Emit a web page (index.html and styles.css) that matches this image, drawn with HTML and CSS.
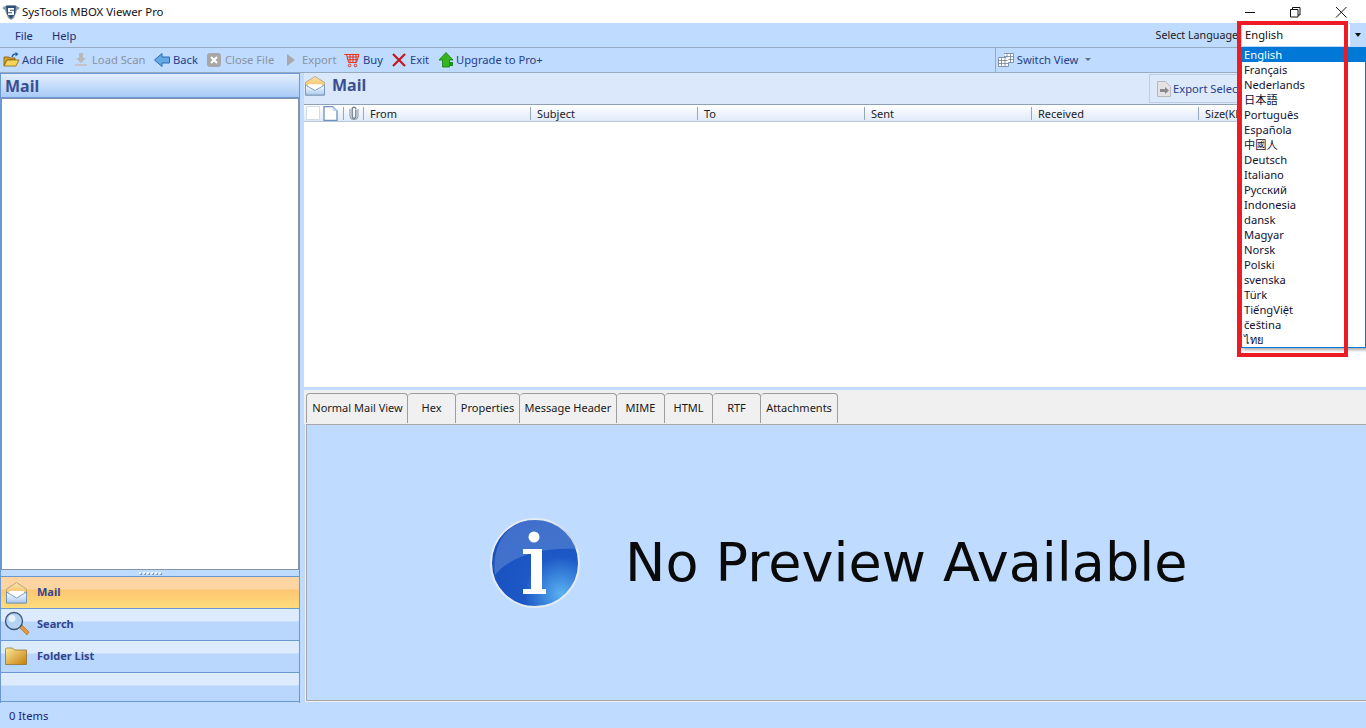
FILE: index.html
```html
<!DOCTYPE html>
<html lang="en">
  <head>
    <meta charset="UTF-8" />
    <meta name="viewport" content="width=device-width, initial-scale=1.0" />
    <title>SysTools MBOX Viewer Pro</title>
    <link rel="stylesheet" href="styles.css">
  </head>
  <body>
    <div id="app">
      <div class="title-bar">
        <svg class="title-logo" width="18" height="16" viewBox="0 0 18 16">
          <path d="M0 4l5-3h8l5 3-3 2-3 8-3 2-3-2-3-8z" fill="#8a97a6" />
          <path d="M4 2h10l-1 8-4 5-4-5z" fill="#2c4f7c" />
          <path d="M6 4h6v1.800H8v1h4V11H6V9.200h4v-1H6z" fill="#ffffff" />
        </svg>
        <span class="title-text">SysTools MBOX Viewer Pro</span>
        <div class="window-buttons">
          <svg class="win-btn" width="46" height="20" viewBox="0 0 46 20"><path d="M19 10.500h10" stroke="#111" fill="none" /></svg>
          <svg class="win-btn" width="46" height="20" viewBox="0 0 46 20"><path d="M18.500 7.500h7.500v7.500h-7.500zM20.500 7.500v-2h7.500v7.500h-2" stroke="#111" fill="none" /></svg>
          <svg class="win-btn" width="46" height="20" viewBox="0 0 46 20"><path d="M18 5l10.500 10.500M28.500 5L18 15.500" stroke="#111" fill="none" /></svg>
        </div>
      </div>

      <div class="menu-bar">
        <span class="menu-item">File</span>
        <span class="menu-item">Help</span>
        <span class="lang-label">Select Language</span>
        <div class="lang-combo">English</div>
        <div class="lang-arrow"></div>
      </div>

      <div class="toolbar">
        <span class="tool tool-add">
          <svg width="17" height="16" viewBox="0 0 17 16">
            <path d="M1 5h5l1 1h5v2H4l-3 6z" fill="#d9a425" stroke="#7a5a10" stroke-width=".8" />
            <path d="M1 14l3-6h12l-3 6z" fill="#f7d45c" stroke="#8a6510" stroke-width=".8" />
            <path d="M9 5c.5-2.500 2.500-3.500 4.500-3" fill="none" stroke="#1f5fa8" stroke-width="1.300" />
            <path d="M12.500 0l3 2-3 2.500z" fill="#1f5fa8" />
          </svg>
          Add File
        </span>
        <span class="tool tool-load off">
          <svg width="16" height="16" viewBox="0 0 16 16">
            <path d="M6 1h4v5h3l-5 5-5-5h3z" fill="#b9b9b9" />
            <path d="M2 12h12v2H2z" fill="#c4c4c4" />
          </svg>
          Load Scan
        </span>
        <span class="tool tool-back">
          <svg width="16" height="16" viewBox="0 0 16 16"><path d="M.500 8L8 1.500V5h7.500v6H8v3.500z" fill="#63a9e6" stroke="#2a6cb0" /></svg>
          Back
        </span>
        <span class="tool tool-close off">
          <svg width="14" height="14" viewBox="0 0 14 14">
            <rect x="0" y="0" width="14" height="14" rx="3" fill="#a7a7a7" />
            <path d="M4 4l6 6M10 4l-6 6" stroke="#ffffff" stroke-width="2" />
          </svg>
          Close File
        </span>
        <span class="tool tool-export off">
          <svg width="8" height="12" viewBox="0 0 8 12"><path d="M0 0l8 6-8 6z" fill="#a9a9a9" /></svg>
          Export
        </span>
        <span class="tool tool-buy">
          <svg width="16" height="16" viewBox="0 0 16 16" fill="none" stroke="#e8341c">
            <path d="M.500 2.500h2l2 8h8l2.500-8zM3 5h11M3.700 7.700h10M6 2.500v8M9 2.500v8M12 2.500v8" />
            <circle cx="5.500" cy="13.500" r="1.300" />
            <circle cx="11.500" cy="13.500" r="1.300" />
          </svg>
          Buy
        </span>
        <span class="tool tool-exit">
          <svg width="14" height="14" viewBox="0 0 14 14"><path d="M1 1l12 12M13 1L1 13" stroke="#c8161d" stroke-width="2.200" /></svg>
          Exit
        </span>
        <span class="tool tool-upgrade">
          <svg width="16" height="16" viewBox="0 0 16 16">
            <path d="M8 .500L15 8h-3.500v7h-7V8H1z" fill="#35b51f" stroke="#167a10" stroke-width=".8" />
            <rect x="11" y="10" width="4" height="4" fill="#1f8f18" />
          </svg>
          Upgrade to Pro+
        </span>
        <span class="tool-switch">
          <svg width="16" height="14" viewBox="0 0 16 14" fill="#ffffff" stroke="#6d8296" stroke-width=".8">
            <path d="M.500 4.500h10v9h-10zM.500 7.500h10M.500 10.500h10M3.500 4.500v9M7 4.500v9" />
            <path d="M6 .500h9.500v9h-5M6 3.500h9.500M9 .500v4M12.500 .500v9M10.500 6.500h5" />
          </svg>
          Switch View
          <i class="caret"></i>
        </span>
      </div>

      <div class="main">
        <div class="left-pane">
          <div class="left-head">Mail</div>
          <div class="left-list"></div>
          <div class="left-splitter"><i></i><i></i><i></i><i></i><i></i><i></i></div>
          <div class="nav-btn nav-active">
            <svg class="nav-icon" width="21" height="22" viewBox="0 0 21 22">
              <defs>
                <linearGradient id="mail-flap" x1="0" y1="0" x2="0" y2="1">
                  <stop offset="0" stop-color="#fbe3a6" />
                  <stop offset="1" stop-color="#eda63a" />
                </linearGradient>
                <linearGradient id="mail-body" x1="0" y1="0" x2="0" y2="1">
                  <stop offset="0" stop-color="#ffffff" />
                  <stop offset="1" stop-color="#a9c8ee" />
                </linearGradient>
              </defs>
              <path d="M.500 7L10.500 .500 20.500 7v14H.500z" fill="url(#mail-flap)" stroke="#a89b80" stroke-width=".8" />
              <path d="M3 9h15v5l-7.500 3L3 14z" fill="#ffffff" />
              <path d="M.500 10l10 6 10-6v11H.500z" fill="url(#mail-body)" stroke="#5d86bb" stroke-width=".8" />
            </svg>
            Mail
          </div>
          <div class="nav-btn">
            <svg class="nav-icon nav-search" width="26" height="26" viewBox="0 0 26 26">
              <path d="M15 15l3-1 7 7-2 3-7-7z" fill="#e9963a" stroke="#a9641c" stroke-width=".6" />
              <circle cx="10" cy="10" r="8.500" fill="#b5d2f2" stroke="#3f5a78" stroke-width="1.400" />
              <circle cx="8" cy="7.500" r="3.500" fill="#e7f1fb" />
            </svg>
            Search
          </div>
          <div class="nav-btn">
            <svg class="nav-icon nav-folder" width="22" height="18" viewBox="0 0 22 18">
              <defs>
                <linearGradient id="folder-fill" x1="0" y1="0" x2="1" y2="1">
                  <stop offset="0" stop-color="#fdeb9f" />
                  <stop offset="1" stop-color="#c57d06" />
                </linearGradient>
              </defs>
              <path d="M.500 2l1-1h6l2 2h12v14.500H.500z" fill="url(#folder-fill)" stroke="#8a6a20" stroke-width=".7" />
            </svg>
            Folder List
          </div>
          <div class="nav-btn nav-empty"></div>
        </div>

        <div class="right-pane">
          <div class="right-head">
            <svg class="right-icon" width="20" height="20" viewBox="0 0 21 22" preserveAspectRatio="none">
              <path d="M.500 7L10.500 .500 20.500 7v14H.500z" fill="url(#mail-flap)" stroke="#a89b80" stroke-width=".8" />
              <path d="M3 9h15v5l-7.500 3L3 14z" fill="#ffffff" />
              <path d="M.500 10l10 6 10-6v11H.500z" fill="url(#mail-body)" stroke="#5d86bb" stroke-width=".8" />
            </svg>
            <span class="right-title">Mail</span>
            <div class="export-btn">
              <svg width="14" height="16" viewBox="0 0 14 16">
                <path d="M.500 .500h8l5 5v10h-13z" fill="#e3e3e3" stroke="#b9b9b9" />
                <path d="M3 8h5V6l4 3.500-4 3.500v-2H3z" fill="#8a8a8a" />
              </svg>
              Export Select
            </div>
          </div>
          <div class="grid-head">
            <span class="col-check"><i></i></span>
            <span class="col-doc">
              <svg width="15" height="15" viewBox="0 0 15 15"><path d="M1 .500h8.500l4.500 4.500v9.500H1z" fill="#ffffff" stroke="#6f8fbc" stroke-width="1.300" /><path d="M9.500 .500v4.500h4.500z" fill="#c9dcf4" /></svg>
            </span>
            <span class="col-clip">
              <svg width="10" height="14" viewBox="0 0 10 14" fill="none" stroke="#7a8592" stroke-width="1.400"><path d="M6.800 3.500v7a1.800 1.800 0 0 1-3.600 0V3a1.800 1.800 0 0 1 3.600 0" /><path d="M9 3v7.500a4 3 0 0 1-8 0V3" stroke-width=".9" /></svg>
            </span>
            <span class="col">From</span>
            <span class="col">Subject</span>
            <span class="col">To</span>
            <span class="col">Sent</span>
            <span class="col">Received</span>
            <span class="col">Size(KB</span>
          </div>
          <div class="grid-body"></div>
          <div class="tabs">
            <span class="tab tab-on tab-normal">Normal Mail View</span>
            <span class="tab tab-hex">Hex</span>
            <span class="tab tab-props">Properties</span>
            <span class="tab tab-header">Message Header</span>
            <span class="tab tab-hex">MIME</span>
            <span class="tab tab-hex">HTML</span>
            <span class="tab tab-hex">RTF</span>
            <span class="tab tab-attach">Attachments</span>
          </div>
          <div class="preview">
            <div class="preview-inner">
              <svg class="info-icon" width="92" height="92" viewBox="0 0 92 92">
                <defs>
                  <radialGradient id="info-fill" cx=".8" cy=".85" r=".85">
                    <stop offset="0" stop-color="#5ab2f2" />
                    <stop offset=".5" stop-color="#1c58c6" />
                    <stop offset="1" stop-color="#1a52c0" />
                  </radialGradient>
                </defs>
                <circle cx="46" cy="46" r="44" fill="url(#info-fill)" stroke="#e4ebf2" stroke-width="2" />
                <path d="M6 58C18 42 48 30 88 32 84 14 66 3 46 3 20 3 2 26 6 58z" fill="#8aa8e0" opacity=".35" />
                <circle cx="45" cy="20" r="5.500" fill="#ffffff" />
                <path d="M34 32H53V72H57V77H34V72H42V37H34z" fill="#ffffff" />
              </svg>
              <span class="preview-text">No Preview Available</span>
            </div>
          </div>
        </div>
      </div>

      <div class="status-bar">0 Items</div>
    </div>

    <div class="lang-list">
      <div class="lang-row lang-selected">English</div>
      <div class="lang-row">Français</div>
      <div class="lang-row">Nederlands</div>
      <div class="lang-row">日本語</div>
      <div class="lang-row">Português</div>
      <div class="lang-row">Española</div>
      <div class="lang-row">中國人</div>
      <div class="lang-row">Deutsch</div>
      <div class="lang-row">Italiano</div>
      <div class="lang-row">Русский</div>
      <div class="lang-row">Indonesia</div>
      <div class="lang-row">dansk</div>
      <div class="lang-row">Magyar</div>
      <div class="lang-row">Norsk</div>
      <div class="lang-row">Polski</div>
      <div class="lang-row">svenska</div>
      <div class="lang-row">Türk</div>
      <div class="lang-row">TiếngViệt</div>
      <div class="lang-row">čeština</div>
      <div class="lang-row lang-thai">ไทย</div>
    </div>
    <div class="red-box"></div>
  </body>
</html>
```

FILE: styles.css
```css
body {
  margin: 0;
  padding: 0;
  overflow: hidden;
  font-family: "Noto Sans", "Noto Sans CJK JP", sans-serif;
  font-size: 11.2px;
  color: #1a2a55;
}

#app {
  width: 1366px;
  height: 728px;
  display: flex;
  flex-direction: column;
  background: #bfdbff;
}

.title-bar {
  height: 23px;
  flex: none;
  display: flex;
  align-items: center;
  background: #ffffff;
  color: #111111;
  padding-left: 2px;
  font-size: 11.4px;
}

.title-logo {
  margin-right: 2px;
}

.window-buttons {
  display: flex;
  margin-left: auto;
  margin-right: 2px;
}

.menu-bar {
  height: 24px;
  flex: none;
  display: flex;
  align-items: center;
  padding-left: 15px;
  background: #bfdbff;
}

.menu-item {
  margin-right: 19px;
  color: #1d2c6b;
}

.lang-label {
  margin-left: auto;
  margin-right: 4px;
  font-size: 10.7px;
  color: #1a1a1a;
}

.lang-combo {
  width: 108px;
  height: 22px;
  box-sizing: border-box;
  padding-left: 3px;
  line-height: 22px;
  background: #ffffff;
  color: #111111;
}

.lang-arrow {
  width: 16px;
  display: flex;
  justify-content: center;
}

.lang-arrow::before {
  content: "";
  border: 3px solid transparent;
  border-top: 4px solid #111111;
  border-bottom: 0;
}

.toolbar {
  height: 26px;
  flex: none;
  box-sizing: border-box;
  display: flex;
  align-items: center;
  padding-left: 3px;
  padding-bottom: 1px;
  border-top: 1px solid #98a9c2;
  border-bottom: 1px solid #98a9c2;
  background: #bfdbff;
}

.tool {
  display: flex;
  align-items: center;
  gap: 3px;
  color: #25408a;
  white-space: nowrap;
}

.tool.off {
  color: #8b929e;
}

.tool-add { width: 70px; gap: 2px; }
.tool-load { width: 81px; }
.tool-back { width: 53px; }
.tool-close { width: 80px; gap: 4px; }
.tool-export { width: 57px; gap: 7px; }
.tool-buy { width: 48px; }
.tool-exit { width: 46px; gap: 4px; }
.tool-upgrade { gap: 2px; }

.tool-switch {
  display: flex;
  align-items: center;
  gap: 3px;
  height: 24px;
  margin-left: 452px;
  padding-left: 2px;
  border-left: 1px solid #98a9c2;
  color: #25408a;
}

.caret {
  margin-left: 4px;
  border: 3px solid transparent;
  border-top: 3px solid #5f6f88;
  border-bottom: 0;
}

.main {
  height: 630px;
  flex: none;
  display: flex;
}

.left-pane {
  width: 300px;
  flex: none;
  box-sizing: border-box;
  display: flex;
  flex-direction: column;
  border-right: 1px solid #6b97d4;
  border-left: 1px solid #6b97d4;
}

.left-head {
  height: 25px;
  box-sizing: border-box;
  padding-left: 4px;
  font-size: 16px;
  font-weight: bold;
  line-height: 25px;
  color: #3a4f92;
  background: linear-gradient(#e3eefe, #a9cbf7);
  border-top: 1px solid #6b97d4;
  border-bottom: 1px solid #6b97d4;
}

.left-list {
  height: 472px;
  box-sizing: border-box;
  background: #ffffff;
  border: 1px solid #8393a8;
}

.left-splitter {
  height: 6px;
  display: flex;
  justify-content: center;
  align-items: center;
  gap: 2px;
  background: #bfdbff;
}

.left-splitter i {
  width: 2px;
  height: 2px;
  background: #f4f8ff;
  box-shadow: 1px 1px 0 #7f9cc4;
}

.nav-btn {
  height: 32px;
  flex: none;
  box-sizing: border-box;
  display: flex;
  align-items: center;
  padding-left: 36px;
  padding-bottom: 2px;
  position: relative;
  font-size: 11px;
  font-weight: bold;
  color: #33458c;
  border-top: 1px solid #6b97d4;
  background: linear-gradient(#dcebfd 0, #dcebfd 12px, #b9d6fd 13px, #b9d6fd 100%);
}

.nav-active {
  background: linear-gradient(#fcd5a2 0, #fcd5a2 12px, #fdc572 13px, #fedd7c 100%);
}

.nav-empty {
  height: 30px;
  border-bottom: 1px solid #6b97d4;
}

.nav-icon {
  position: absolute;
  left: 5px;
  top: 5px;
}

.nav-search {
  left: 3px;
  top: 2px;
}

.nav-folder {
  left: 4px;
  top: 6px;
}

.right-pane {
  flex: 1;
  min-width: 0;
  display: flex;
  flex-direction: column;
  margin-left: 4px;
}

.right-head {
  height: 31px;
  flex: none;
  box-sizing: border-box;
  display: flex;
  align-items: flex-start;
  padding-left: 1px;
  background: #dbe8fc;
}

.right-icon {
  margin-top: 3px;
}

.right-title {
  margin-left: 7px;
  font-size: 16px;
  font-weight: bold;
  line-height: 24px;
  color: #3a4f92;
}

.export-btn {
  display: flex;
  align-items: center;
  gap: 2px;
  width: 217px;
  height: 29px;
  margin-top: 1px;
  margin-left: auto;
  padding-left: 7px;
  box-sizing: border-box;
  color: #25408a;
  background: #dce9fb;
  border: 1px solid #bccde4;
  white-space: nowrap;
}

.grid-head {
  height: 18px;
  flex: none;
  box-sizing: border-box;
  display: flex;
  align-items: center;
  color: #222222;
  font-size: 11px;
  background: linear-gradient(#ffffff, #dfeafa);
  border-bottom: 1px solid #b7c6da;
  border-top: 1px solid #8f9fb5;
}

.grid-head span {
  box-sizing: border-box;
  height: 13px;
  display: flex;
  align-items: center;
}

.col-check {
  width: 18px;
  padding-left: 2px;
}

.col-check i {
  width: 14px;
  height: 14px;
  background: #ffffff;
  border: 1px solid #d3dce8;
  box-sizing: border-box;
}

.col-doc {
  width: 22px;
  padding-left: 1px;
  border-right: 1px solid #98a7bb;
}

.col-clip {
  width: 20px;
  padding-left: 5px;
  border-right: 1px solid #98a7bb;
}

.grid-head .col {
  width: 167px;
  padding-left: 6px;
  border-right: 1px solid #98a7bb;
}

.grid-body {
  height: 265px;
  flex: none;
  background: #ffffff;
}

.tabs {
  height: 34px;
  flex: none;
  box-sizing: border-box;
  display: flex;
  align-items: flex-end;
  margin-top: 3px;
  padding-left: 2px;
  background: #f0f0f0;
}

.tab {
  height: 31px;
  box-sizing: border-box;
  display: flex;
  align-items: center;
  justify-content: center;
  padding-bottom: 2px;
  font-size: 11px;
  color: #1a1a1a;
  background: #f0f0f0;
  border: 1px solid #9d9d9d;
  border-left: 0;
  border-radius: 4px 4px 0 0;
}

.tab-on {
  padding-bottom: 3px;
  border-left: 1px solid #9d9d9d;
  border-bottom: 0;
}

.tab-normal { width: 102px; padding-left: 1px; }
.tab-hex { width: 48px; }
.tab-props { width: 64px; }
.tab-header { width: 97px; }
.tab-attach { width: 77px; }

.preview {
  flex: 1;
  min-height: 0;
  box-sizing: border-box;
  margin-left: 2px;
  margin-bottom: 2px;
  border: 1px solid #a8a8a8;
  border-right: 0;
  outline: 1px solid #f0f0f0;
  background: #bfdbff;
}

.preview-inner {
  display: flex;
  align-items: center;
  height: 100%;
  padding-left: 182px;
  gap: 44px;
}

.info-icon {
  flex: none;
}

.preview-text {
  font-family: "DejaVu Sans", sans-serif;
  font-size: 54px;
  color: #0a0a0a;
  white-space: nowrap;
}

.status-bar {
  flex: 1;
  display: flex;
  align-items: center;
  padding-left: 9px;
  color: #1a1a7a;
}

/* dropdown and the red mark lie over the window */
.lang-list {
  position: absolute;
  left: 1241px;
  top: 47px;
  width: 125px;
  height: 301px;
  box-sizing: border-box;
  background: #ffffff;
  border: 1px solid #0078d7;
  border-top: 0;
  box-shadow: 2px 2px 3px rgba(0, 0, 0, 0.35);
  color: #111133;
}

.lang-row {
  height: 15px;
  padding-left: 2px;
  line-height: 15px;
  white-space: nowrap;
}

.lang-selected {
  background: #0078d7;
  color: #ffffff;
}

.lang-thai {
  font-size: 11px;
}

.red-box {
  position: absolute;
  left: 1237px;
  top: 21px;
  width: 103px;
  height: 328px;
  border: 4px solid #ed1c24;
}
```
